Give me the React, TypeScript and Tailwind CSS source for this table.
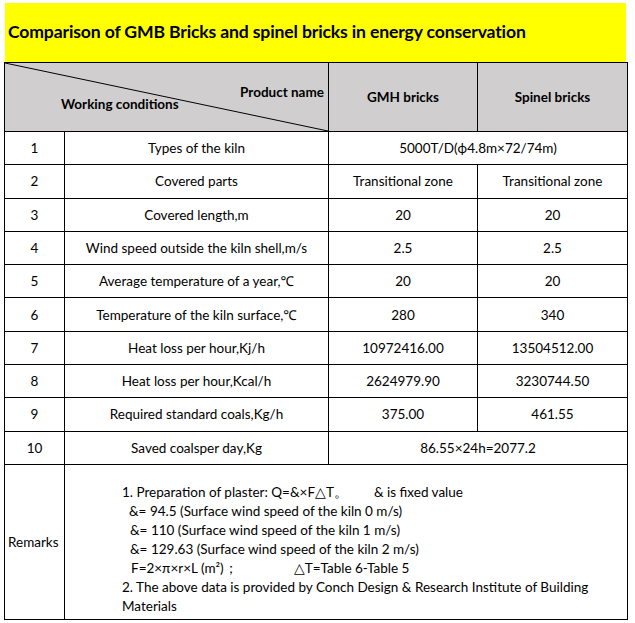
import React from "react"

const rows: { no: string; name: string; a: string; b?: string }[] = [
    { no: "1", name: "Types of the kiln", a: "5000T/D(ф4.8m×72/74m)" },
    { no: "2", name: "Covered parts", a: "Transitional zone", b: "Transitional zone" },
    { no: "3", name: "Covered length,m", a: "20", b: "20" },
    { no: "4", name: "Wind speed outside the kiln shell,m/s", a: "2.5", b: "2.5" },
    { no: "5", name: "Average temperature of a year,℃", a: "20", b: "20" },
    { no: "6", name: "Temperature of the kiln surface,℃", a: "280", b: "340" },
    { no: "7", name: "Heat loss per hour,Kj/h", a: "10972416.00", b: "13504512.00" },
    { no: "8", name: "Heat loss per hour,Kcal/h", a: "2624979.90", b: "3230744.50" },
    { no: "9", name: "Required standard coals,Kg/h", a: "375.00", b: "461.55" },
    { no: "10", name: "Saved coalsper day,Kg", a: "86.55×24h=2077.2" },
]

const cell = "border border-black text-center align-middle p-0"

export default function App() {
    return (
        <div className="w-[635px] h-[623px] bg-white pt-[3px] text-black" style={{ fontFamily: "Lato, 'Noto Sans', sans-serif" }}>
            {/* title bar */}
            <div className="ml-[5px] w-[621px] h-[59px] bg-[#ffff00] flex items-center pl-[3px]">
                <h1 className="text-[17.6px] font-bold tracking-[-0.15px]">
                    Comparison of GMB Bricks and spinel bricks in energy conservation
                </h1>
            </div>

            <table className="ml-[4px] w-[623px] table-fixed border-collapse border border-black text-[13.5px]">
                <colgroup>
                    <col className="w-[60px]" />
                    <col className="w-[264px]" />
                    <col className="w-[149px]" />
                    <col className="w-[150px]" />
                </colgroup>
                <thead>
                    <tr className="h-[68px] bg-[#d0cece] font-bold">
                        <th colSpan={2} className="border border-black p-0 relative font-bold">
                            <svg className="absolute inset-0 w-full h-full" viewBox="0 0 324 68" preserveAspectRatio="none">
                                <line x1="0" y1="0" x2="324" y2="68" stroke="#000" strokeWidth="1" />
                            </svg>
                            <div className="relative h-[68px]">
                                <span className="absolute right-[4px] top-[19px]">Product name</span>
                                <span className="absolute left-[56px] top-[31px]">Working conditions</span>
                            </div>
                        </th>
                        <th className={cell + " font-bold"}>GMH bricks</th>
                        <th className={cell + " font-bold"}>Spinel bricks</th>
                    </tr>
                </thead>
                <tbody>
                    {rows.map(r => (
                        <tr key={r.no} className="h-[33.3px]">
                            <td className={cell}>{r.no}</td>
                            <td className={cell}>{r.name}</td>
                            {r.b === undefined ? (
                                <td colSpan={2} className={cell}>{r.a}</td>
                            ) : (
                                <>
                                    <td className={cell}>{r.a}</td>
                                    <td className={cell}>{r.b}</td>
                                </>
                            )}
                        </tr>
                    ))}
                    <tr className="h-[155px]">
                        <td className="border border-black align-middle text-left pl-[3px]">Remarks</td>
                        <td colSpan={3} className="border border-black align-middle text-left pl-[57px] pr-[2px] pt-[16px] leading-[19px]">
                            <div>1. Preparation of plaster: Q=&amp;×F△T。<span className="inline-block w-[26px]" />&amp; is fixed value</div>
                            <div className="pl-[7px]">&amp;= 94.5 (Surface wind speed of the kiln 0 m/s)</div>
                            <div className="pl-[8px]">&amp;= 110 (Surface wind speed of the kiln 1 m/s)</div>
                            <div className="pl-[8px]">&amp;= 129.63 (Surface wind speed of the kiln 2 m/s)</div>
                            <div className="pl-[9px]">F=2×π×r×L (m²)；<span className="inline-block w-[56px]" />△T=Table 6-Table 5</div>
                            <div>2. The above data is provided by Conch Design &amp; Research Institute of Building Materials</div>
                        </td>
                    </tr>
                </tbody>
            </table>
        </div>
    )
}
